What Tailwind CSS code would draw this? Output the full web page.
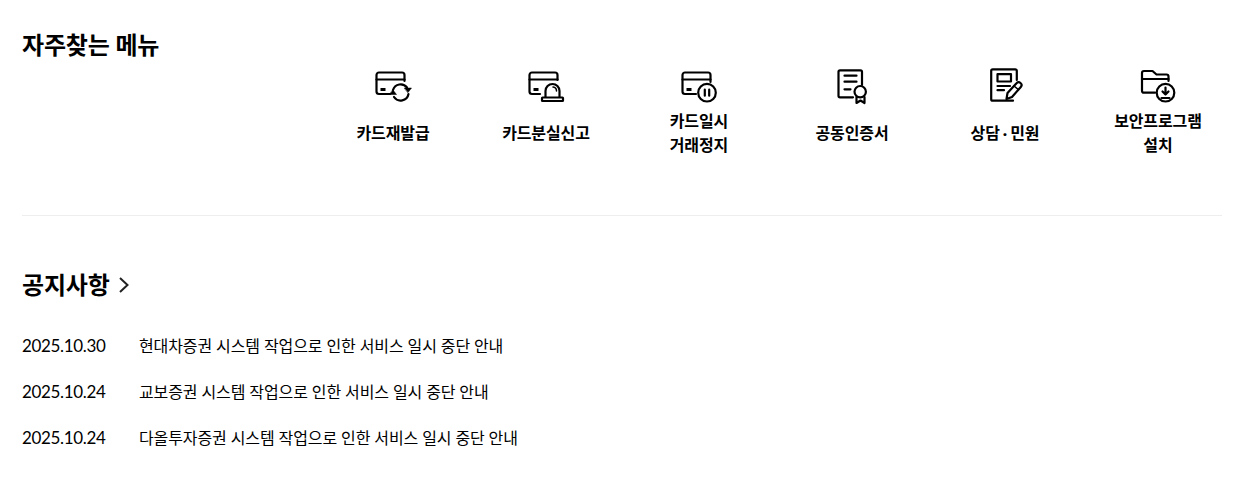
<!DOCTYPE html>
<html lang="ko">
  <head>
    <meta charset="UTF-8" />
    <title>자주찾는 메뉴</title>
    <script src="https://cdn.jsdelivr.net/npm/@tailwindcss/browser@4"></script>
  </head>
  <body class="bg-white text-black font-['Lato','Noto_Sans_CJK_KR',sans-serif] overflow-hidden">
    <div class="w-[1245px] h-[482px] pl-[22px] pr-[23px]">
      <!-- Quick menu -->
      <section class="h-[216px] border-b border-[#eeeeee] flex items-start relative">
        <h2 class="pt-[27px] text-[24px] leading-[36px] font-bold tracking-[-0.15px] w-[294.5px] shrink-0">자주찾는 메뉴</h2>
        <ul class="grid grid-cols-6 w-[918px] shrink-0 pt-[65px] text-[16px] leading-[23.5px] font-bold tracking-[-0.1px] text-center">
          <li class="flex flex-col items-center">
            <svg class="w-[40px] h-[40px]" viewBox="0 0 40 40" fill="none" stroke="black" stroke-width="2.200" stroke-linecap="round" stroke-linejoin="round">
              <path d="M17 29H6A2.500 2.500 0 0 1 3.500 26.500V10A2.500 2.500 0 0 1 6 7.500H29A2.500 2.500 0 0 1 31.500 10V16" />
              <path d="M3.500 14.500H31.500" />
              <path d="M7.500 24.500H12.500" stroke-width="3" stroke-linecap="butt" />
              <path d="M20 25A8 8 0 0 1 34 22.500M35.500 29A8 8 0 0 1 21 32" />
              <path d="M31.500 23H38.500L35 27.500ZM16.500 29.500H23.500L20 25Z" fill="black" stroke-width="0.500" />
            </svg>
            <span class="h-[48px] mt-[3px] pt-[1px] flex items-center">카드재발급</span>
          </li>
          <li class="flex flex-col items-center">
            <svg class="w-[40px] h-[40px]" viewBox="0 0 40 40" fill="none" stroke="black" stroke-width="2.200" stroke-linecap="round" stroke-linejoin="round">
              <path d="M14 29H6A2.500 2.500 0 0 1 3.500 26.500V10A2.500 2.500 0 0 1 6 7.500H29A2.500 2.500 0 0 1 31.500 10V15" />
              <path d="M3.500 14.500H31.500" />
              <path d="M7.500 24.500H12.500" stroke-width="3" stroke-linecap="butt" />
              <path d="M19.500 32V26A7 7 0 0 1 33.500 26V32" />
              <path d="M27 22A4 4 0 0 1 30.500 26" stroke-width="1.500" />
              <rect x="16" y="32.500" width="21" height="3.500" rx="0.500" />
            </svg>
            <span class="h-[48px] mt-[3px] pt-[1px] flex items-center">카드분실신고</span>
          </li>
          <li class="flex flex-col items-center">
            <svg class="w-[40px] h-[40px]" viewBox="0 0 40 40" fill="none" stroke="black" stroke-width="2.200" stroke-linecap="round" stroke-linejoin="round">
              <path d="M17 29H6A2.500 2.500 0 0 1 3.500 26.500V10A2.500 2.500 0 0 1 6 7.500H29A2.500 2.500 0 0 1 31.500 10V17" />
              <path d="M3.500 14.500H31.500" />
              <path d="M7.500 24.500H12.500" stroke-width="3" stroke-linecap="butt" />
              <circle cx="28" cy="27.700" r="8.800" />
              <path d="M25.800 24.700V30.700M30.200 24.700V30.700" />
            </svg>
            <span class="h-[48px] mt-[3px] pt-[1px] flex items-center">카드일시<br />거래정지</span>
          </li>
          <li class="flex flex-col items-center">
            <svg class="w-[40px] h-[40px]" viewBox="0 0 40 40" fill="none" stroke="black" stroke-width="2.200" stroke-linecap="round" stroke-linejoin="round">
              <path d="M21 32.300H8A1.500 1.500 0 0 1 6.500 30.800V6.800A1.500 1.500 0 0 1 8 5.300H28.500A1.500 1.500 0 0 1 30 6.800V20" />
              <path d="M12.500 10.700H24.500M12.500 16.700H24.500M12.500 24.300H18.500" />
              <circle cx="28.200" cy="26.700" r="5.700" />
              <path d="M24.500 32V38L28.500 35.500L32.500 38V32" />
            </svg>
            <span class="h-[48px] mt-[3px] pt-[1px] flex items-center">공동인증서</span>
          </li>
          <li class="flex flex-col items-center">
            <svg class="w-[40px] h-[40px]" viewBox="0 0 40 40" fill="none" stroke="black" stroke-width="2.200" stroke-linecap="round" stroke-linejoin="round">
              <path d="M31.800 15V5.800A1.500 1.500 0 0 0 30.300 4.300H7.700A1.500 1.500 0 0 0 6.200 5.800V34.200A1.500 1.500 0 0 0 7.700 35.700H28" />
              <rect x="12.500" y="9.200" width="13.500" height="7.300" />
              <path d="M12.500 21H25M12.500 25.200H19" />
              <path d="M21.500 34L22.500 28L31.500 18.300A2.700 2.700 0 0 1 35.800 22L27 32Z" />
              <path d="M29 21L33.500 24.700" stroke-width="1.500" />
            </svg>
            <span class="h-[48px] mt-[3px] pt-[1px] flex items-center">상담<span class="mx-[3px]">·</span>민원</span>
          </li>
          <li class="flex flex-col items-center">
            <svg class="w-[40px] h-[40px]" viewBox="0 0 40 40" fill="none" stroke="black" stroke-width="2.200" stroke-linecap="round" stroke-linejoin="round">
              <path d="M17 27.700H6A2 2 0 0 1 4 25.700V8A2 2 0 0 1 6 6H14.500L18.500 9.500H28.500A2 2 0 0 1 30.500 11.500V16" />
              <path d="M4 14H30.500" />
              <circle cx="27.500" cy="27.700" r="8.800" />
              <path d="M27.500 22.500V29.500M24.500 26.500L27.500 29.500L30.500 26.500" />
              <path d="M23.500 33H31.500" />
            </svg>
            <span class="h-[48px] mt-[3px] pt-[1px] flex items-center">보안프로그램<br />설치</span>
          </li>
        </ul>
      </section>

      <!-- Notices -->
      <section class="pt-[51px]">
        <h2 class="flex items-center gap-[8px] text-[24px] leading-[36px] font-bold tracking-[-0.15px]">
          공지사항
          <svg class="w-[14px] h-[18px]" viewBox="0 0 14 18" fill="none" stroke="#222222" stroke-width="2">
            <path d="M2 2L9.500 9L2 16" />
          </svg>
        </h2>
        <ul class="mt-[31px] flex flex-col gap-[22px] text-[16px] leading-[24px] tracking-[-0.1px]">
          <li class="flex"><span class="w-[117px] shrink-0 text-[17px] tracking-[-0.35px]">2025.10.30</span><span>현대차증권 시스템 작업으로 인한 서비스 일시 중단 안내</span></li>
          <li class="flex"><span class="w-[117px] shrink-0 text-[17px] tracking-[-0.35px]">2025.10.24</span><span>교보증권 시스템 작업으로 인한 서비스 일시 중단 안내</span></li>
          <li class="flex"><span class="w-[117px] shrink-0 text-[17px] tracking-[-0.35px]">2025.10.24</span><span>다올투자증권 시스템 작업으로 인한 서비스 일시 중단 안내</span></li>
        </ul>
      </section>
    </div>
  </body>
</html>
